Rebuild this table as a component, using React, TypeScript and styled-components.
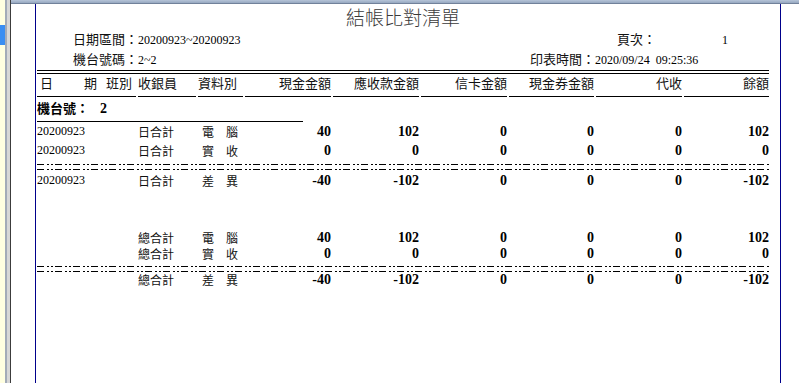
import React from "react";
import styled, { createGlobalStyle } from "styled-components";

const GlobalStyle = createGlobalStyle`
  html, body {
    margin: 0;
    padding: 0;
    background: #ffffff;
  }
  body {
    width: 799px;
    height: 383px;
    overflow: hidden;
    font-family: "Noto Sans CJK TC", "Liberation Sans", sans-serif;
    color: #000;
  }
`;

const CJK = `"Noto Sans CJK TC", "Noto Sans CJK SC", sans-serif`;
const SERIF = `"Liberation Serif", "DejaVu Serif", serif`;

const Screen = styled.div`
  display: flex;
  width: 799px;
  height: 383px;
  overflow: hidden;
  background: #fff;
`;

const SideStrip = styled.div`
  flex: none;
  width: 5px;
  padding-top: 25px;
  box-sizing: border-box;
  background: #ffffe1;
`;

const Selection = styled.div`
  height: 20px;
  background: #3a8ef2;
`;

const SideEdge = styled.div`
  flex: none;
  width: 6px;
  background: linear-gradient(
    to right,
    #a3abb8 0 2px,
    #d7d7d7 2px 5px,
    #3c3c3c 5px 6px
  );
`;

const Main = styled.div`
  flex: 1;
  min-width: 0;
  display: flex;
  flex-direction: column;
`;

const TopBar = styled.div`
  flex: none;
  height: 4px;
  box-sizing: border-box;
  background: linear-gradient(#b6c4d8, #96a8c0);
  border-bottom: 1px solid #71819a;
`;

const Viewport = styled.div`
  flex: 1;
  min-height: 0;
  display: flex;
  padding-left: 24px;
`;

const Page = styled.div`
  width: 746px;
  box-sizing: border-box;
  border-left: 1px solid #00008b;
  border-right: 1px solid #00008b;
  padding: 0 11px 0 1px;
  display: flex;
  flex-direction: column;
`;

const Report = styled.div`
  width: 732px;
  display: flex;
  flex-direction: column;
`;

const Title = styled.h1`
  margin: 0;
  font-family: ${CJK};
  font-size: 19px;
  font-weight: 300;
  line-height: 25px;
  text-align: center;
  color: #3a3a3a;
`;

const InfoRow = styled.div`
  display: flex;
  align-items: center;
  height: 20px;
  padding-left: 36px;
`;

const InfoField = styled.div<{ $width?: number; $indent?: number }>`
  display: flex;
  align-items: baseline;
  ${(p) => (p.$width ? `width: ${p.$width}px; flex: none;` : "")}
  margin-left: ${(p) => p.$indent ?? 0}px;
`;

const Label = styled.span`
  font-family: ${CJK};
  font-size: 13px;
  line-height: 20px;
  color: #111;
`;

const Value = styled.span<{ $gap?: number }>`
  font-family: ${SERIF};
  font-size: 12px;
  line-height: 20px;
  white-space: pre;
  margin-left: ${(p) => p.$gap ?? 0}px;
`;

const Columns = styled.div<{ $rowHeight: number }>`
  display: grid;
  grid-template-columns: 99px 58px 45px 86px 86px 86px 85px 86px 85px;
  column-gap: 2px;
  line-height: ${(p) => p.$rowHeight}px;
`;

const HeaderGrid = styled(Columns)`
  margin-top: 1px;
  border-top: 4px double #000;
`;

const HeaderCell = styled.div<{ $align?: "left" | "right" }>`
  font-family: ${CJK};
  font-size: 13px;
  color: #111;
  padding-bottom: 5px;
  border-bottom: 1px solid #000;
  text-align: ${(p) => p.$align ?? "left"};
  white-space: nowrap;
`;

const DateHead = styled(HeaderCell)`
  display: flex;
  padding-left: 3px;
`;

const HeadWord = styled.span<{ $gap: number }>`
  margin-left: ${(p) => p.$gap}px;
`;

const GroupTitle = styled.div`
  width: 266px;
  margin-top: 1px;
  padding-bottom: 2px;
  border-bottom: 1px solid #000;
  line-height: 20px;
  display: flex;
  align-items: baseline;
`;

const GroupLabel = styled.span`
  font-family: ${CJK};
  font-size: 13px;
  font-weight: 700;
`;

const GroupValue = styled.span`
  font-family: ${SERIF};
  font-size: 14px;
  font-weight: 700;
  margin-left: 11px;
`;

const DateCell = styled.div`
  font-family: ${SERIF};
  font-size: 12px;
`;

const TextCell = styled.div<{ $indent?: number }>`
  font-family: ${CJK};
  font-size: 12px;
  white-space: pre;
  color: #111;
  padding-left: ${(p) => p.$indent ?? 0}px;
`;

const AmountCell = styled.div`
  font-family: ${SERIF};
  font-size: 14px;
  font-weight: 700;
  text-align: right;
`;

const Separator = styled.div<{ $top: number; $bottom: number }>`
  height: 6px;
  width: 732px;
  margin-top: ${(p) => p.$top}px;
  margin-bottom: ${(p) => p.$bottom}px;
  background-image: repeating-linear-gradient(
      to right,
      #000 0 7px,
      transparent 7px 10px,
      #000 10px 12px,
      transparent 12px 14px,
      #000 14px 16px,
      transparent 16px 18px
    ),
    repeating-linear-gradient(
      to right,
      #000 0 7px,
      transparent 7px 10px,
      #000 10px 12px,
      transparent 12px 14px,
      #000 14px 16px,
      transparent 16px 18px
    );
  background-size: 100% 1px, 100% 1px;
  background-position: 0 0, 0 100%;
  background-repeat: no-repeat;
`;

const TotalsBlock = styled.div`
  margin-top: 40px;
  display: flex;
  flex-direction: column;
`;

type Row = {
  date?: string;
  who: string;
  kind: string;
  values: string[];
};

const DataRow: React.FC<{ row: Row; height: number }> = ({ row, height }) => (
  <Columns $rowHeight={height}>
    <DateCell>{row.date ?? ""}</DateCell>
    <TextCell>{row.who}</TextCell>
    <TextCell $indent={4}>{row.kind}</TextCell>
    {row.values.map((v, i) => (
      <AmountCell key={i}>{v}</AmountCell>
    ))}
  </Columns>
);

const dayRows: Row[] = [
  { date: "20200923", who: "日合計", kind: "電\u3000腦", values: ["40", "102", "0", "0", "0", "102"] },
  { date: "20200923", who: "日合計", kind: "實\u3000收", values: ["0", "0", "0", "0", "0", "0"] },
];
const dayDiff: Row = {
  date: "20200923",
  who: "日合計",
  kind: "差\u3000異",
  values: ["-40", "-102", "0", "0", "0", "-102"],
};

const totalRows: Row[] = [
  { who: "總合計", kind: "電\u3000腦", values: ["40", "102", "0", "0", "0", "102"] },
  { who: "總合計", kind: "實\u3000收", values: ["0", "0", "0", "0", "0", "0"] },
];
const totalDiff: Row = {
  who: "總合計",
  kind: "差\u3000異",
  values: ["-40", "-102", "0", "0", "0", "-102"],
};

const amountHeads = ["現金金額", "應收款金額", "信卡金額", "現金券金額", "代收", "餘額"];

export default function App() {
  return (
    <>
      <GlobalStyle />
      <Screen>
        <SideStrip>
          <Selection />
        </SideStrip>
        <SideEdge />
        <Main>
          <TopBar />
          <Viewport>
            <Page>
              <Report>
                <Title>結帳比對清單</Title>
                <InfoRow>
                  <InfoField $width={457}>
                    <Label>日期區間：</Label>
                    <Value>20200923~20200923</Value>
                  </InfoField>
                  <InfoField $indent={87}>
                    <Label>頁次：</Label>
                    <Value $gap={66}>1</Value>
                  </InfoField>
                </InfoRow>
                <InfoRow>
                  <InfoField $width={457}>
                    <Label>機台號碼：</Label>
                    <Value>2~2</Value>
                  </InfoField>
                  <InfoField>
                    <Label>印表時間：</Label>
                    <Value>2020/09/24  09:25:36</Value>
                  </InfoField>
                </InfoRow>

                <HeaderGrid $rowHeight={17}>
                  <DateHead>
                    <HeadWord $gap={0}>日</HeadWord>
                    <HeadWord $gap={31}>期</HeadWord>
                    <HeadWord $gap={9}>班別</HeadWord>
                  </DateHead>
                  <HeaderCell>收銀員</HeaderCell>
                  <HeaderCell>資料別</HeaderCell>
                  {amountHeads.map((h) => (
                    <HeaderCell key={h} $align="right">
                      {h}
                    </HeaderCell>
                  ))}
                </HeaderGrid>

                <GroupTitle>
                  <GroupLabel>機台號：</GroupLabel>
                  <GroupValue>2</GroupValue>
                </GroupTitle>

                {dayRows.map((r, i) => (
                  <DataRow key={i} row={r} height={19} />
                ))}
                <Separator $top={4} $bottom={1} />
                <DataRow row={dayDiff} height={19} />

                <TotalsBlock>
                  {totalRows.map((r, i) => (
                    <DataRow key={i} row={r} height={16} />
                  ))}
                  <Separator $top={4} $bottom={0} />
                  <DataRow row={totalDiff} height={16} />
                </TotalsBlock>
              </Report>
            </Page>
          </Viewport>
        </Main>
      </Screen>
    </>
  );
}
